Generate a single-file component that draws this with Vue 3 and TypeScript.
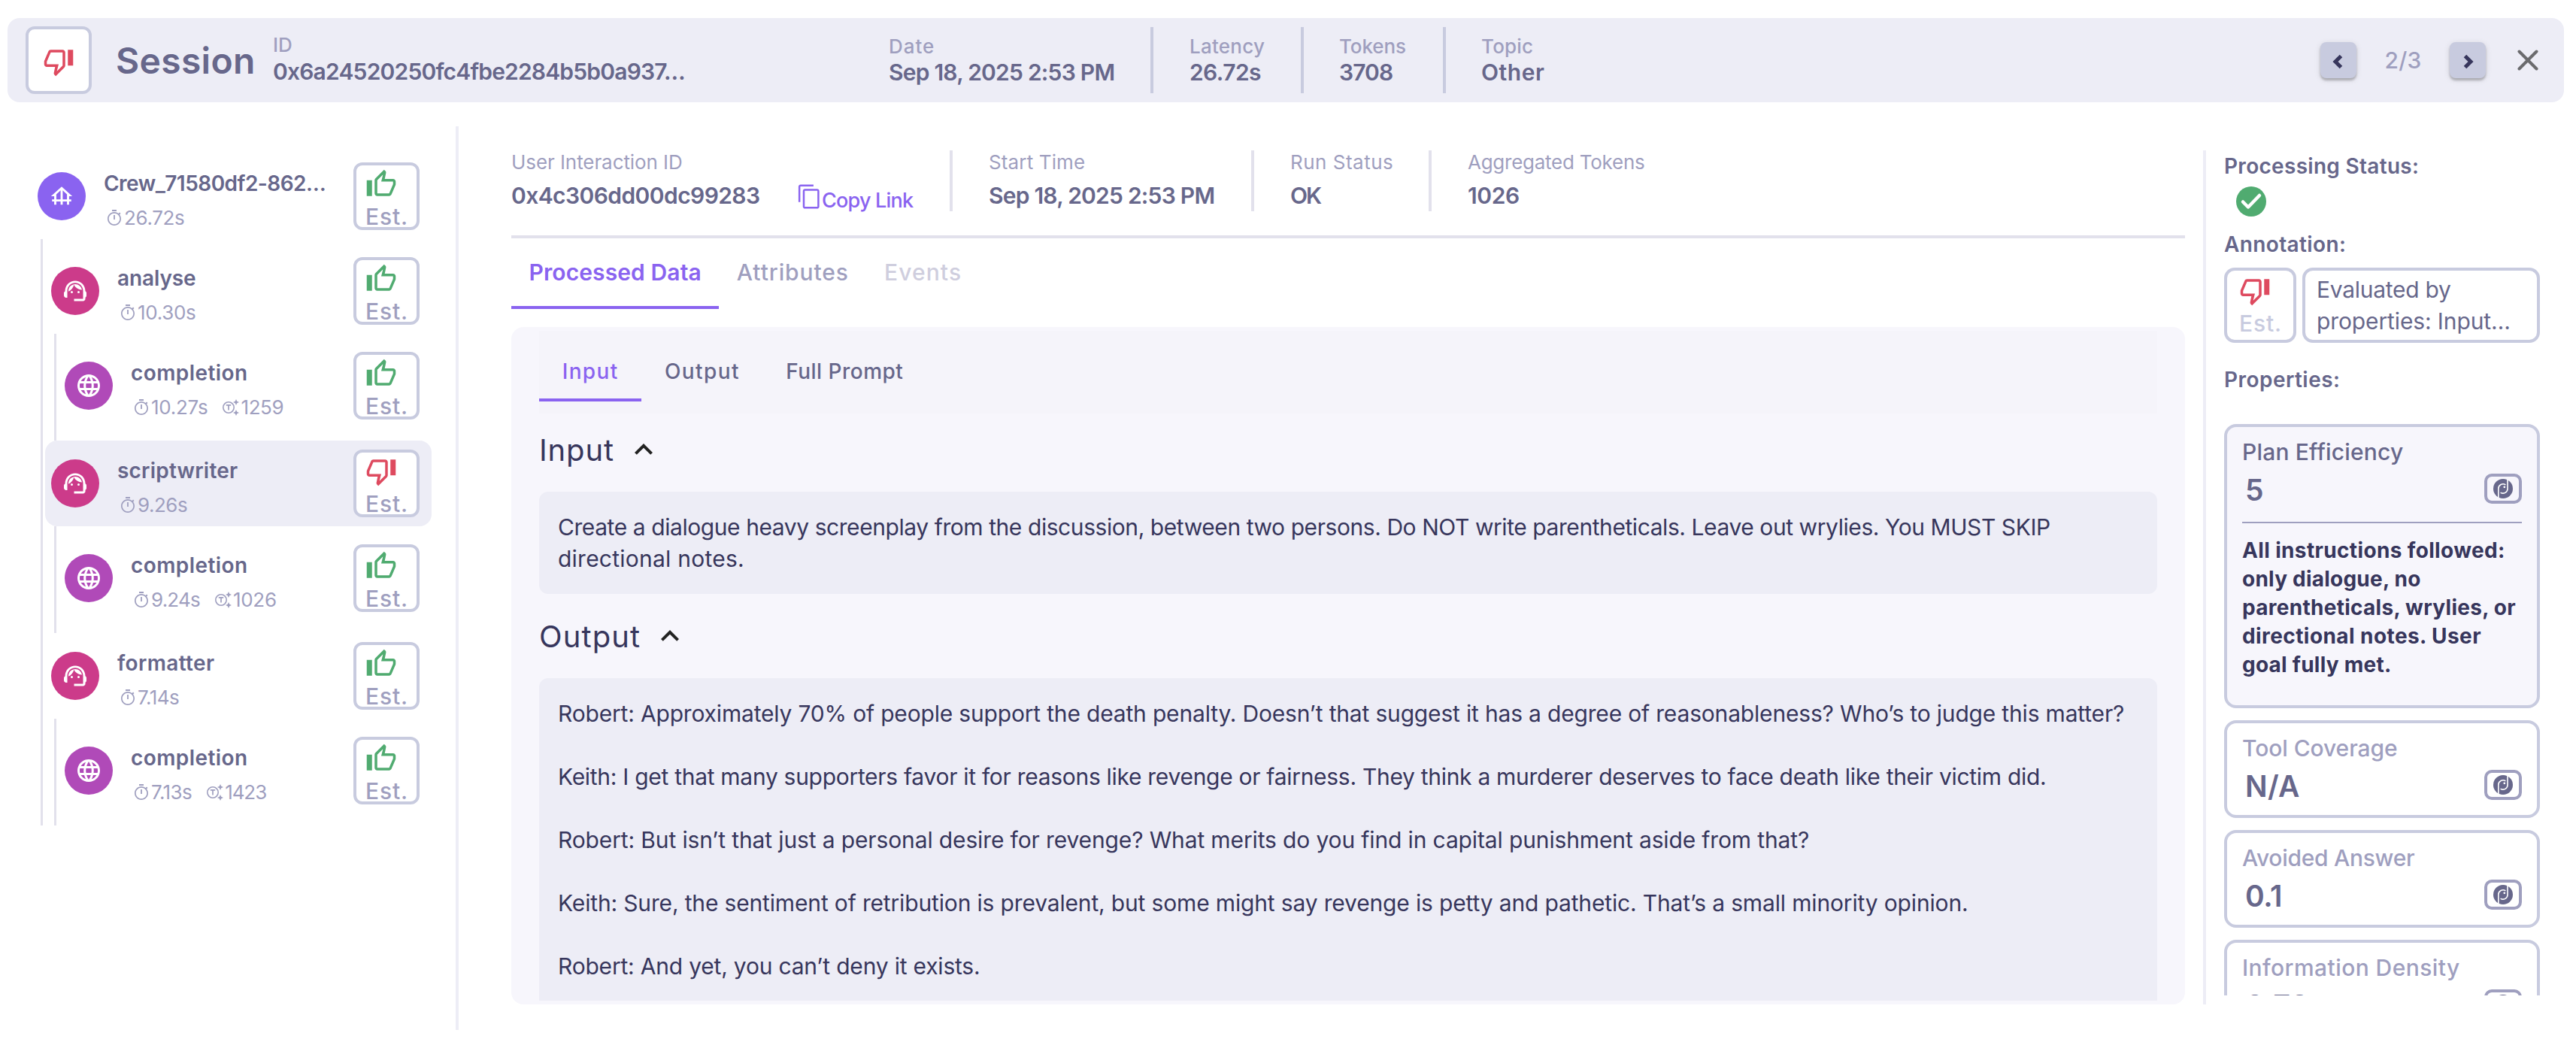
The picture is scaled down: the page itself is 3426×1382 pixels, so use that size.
<script setup lang="ts">
import type { Directive } from 'vue'

type Verdict = 'up' | 'down'
type Kind = 'crew' | 'agent' | 'llm'

interface Fitted {
  text: string
  fit: number
}

interface Span {
  kind: Kind
  name: Fitted
  time: Fitted
  tokens?: Fitted
  verdict: Verdict
  selected?: boolean
  children?: Span[]
}

/** Tracks a single-line label so that its glyphs span the given width in px. */
const vFit: Directive<HTMLElement, number> = {
  mounted(el, { value }) {
    const text = (el.textContent ?? '').trim()
    const ctx = document.createElement('canvas').getContext('2d')
    if (!ctx || text.length < 2) return
    const cs = getComputedStyle(el)
    ctx.font = `${cs.fontWeight} ${cs.fontSize} ${cs.fontFamily}`
    const m = ctx.measureText(text)
    const ink = m.actualBoundingBoxLeft + m.actualBoundingBoxRight
    el.style.letterSpacing = `${((value - ink) / (text.length - 1)).toFixed(3)}px`
  },
}

const icons: Record<Kind | Verdict | 'timer', string> = {
  crew: 'M19 12h3L12 3 2 12h3v3H3v2h2v3h2v-3h4v3h2v-3h4v3h2v-3h2v-2h-2v-3zM7 15v-4.81l4-3.6V15H7zm6 0V6.59l4 3.6V15h-4z',
  agent:
    'M21 12.22C21 6.73 16.74 3 12 3c-4.69 0-9 3.65-9 9.28-.6.34-1 .98-1 1.72v2c0 1.1.9 2 2 2h1v-6.1c0-3.87 3.13-7 7-7s7 3.13 7 7V19h-8v2h8c1.1 0 2-.9 2-2v-1.22c.59-.31 1-.92 1-1.64v-2.3c0-.7-.41-1.31-1-1.62zM8 13a1 1 0 1 0 2 0 1 1 0 1 0-2 0zM14 13a1 1 0 1 0 2 0 1 1 0 1 0-2 0zM18 11.03C17.52 8.18 15.04 6 12.05 6c-3.03 0-6.29 2.51-6.03 6.45 2.47-1.01 4.33-3.21 4.86-5.89 1.31 2.63 4 4.44 7.12 4.47z',
  llm: 'M11.99 2C6.47 2 2 6.48 2 12s4.47 10 9.99 10C17.52 22 22 17.52 22 12S17.52 2 11.99 2zm6.93 6h-2.95c-.32-1.25-.78-2.45-1.38-3.56 1.84.63 3.37 1.91 4.33 3.56zM12 4.04c.83 1.2 1.48 2.53 1.91 3.96h-3.82c.43-1.43 1.08-2.76 1.91-3.96zM4.26 14C4.1 13.36 4 12.69 4 12s.1-1.36.26-2h3.38c-.08.66-.14 1.32-.14 2s.06 1.34.14 2H4.26zm.82 2h2.95c.32 1.25.78 2.45 1.38 3.56-1.84-.63-3.37-1.9-4.33-3.56zm2.95-8H5.08c.96-1.66 2.49-2.93 4.33-3.56C8.81 5.55 8.35 6.75 8.03 8zM12 19.96c-.83-1.2-1.48-2.53-1.91-3.96h3.82c-.43 1.43-1.08 2.76-1.91 3.96zM14.34 14H9.66c-.09-.66-.16-1.32-.16-2s.07-1.35.16-2h4.68c.09.65.16 1.32.16 2s-.07 1.34-.16 2zm.25 5.56c.6-1.11 1.06-2.31 1.38-3.56h2.95c-.96 1.65-2.49 2.93-4.33 3.56zM16.36 14c.08-.66.14-1.32.14-2s-.06-1.34-.14-2h3.38c.16.64.26 1.31.26 2s-.1 1.36-.26 2h-3.38z',
  up: 'M9 21h9c.83 0 1.54-.5 1.84-1.22l3.02-7.05c.09-.23.14-.47.14-.73v-2c0-1.1-.9-2-2-2h-6.31l.95-4.57.03-.32c0-.41-.17-.79-.44-1.06L14.17 1 7.58 7.59C7.22 7.95 7 8.45 7 9v10c0 1.1.9 2 2 2zM9 9l4.34-4.34L12 10h9v2l-3 7H9V9zM1 9h4v12H1z',
  down: 'M15 3H6c-.83 0-1.54.5-1.84 1.22l-3.02 7.05c-.09.23-.14.47-.14.73v2c0 1.1.9 2 2 2h6.31l-.95 4.57-.03.32c0 .41.17.79.44 1.06L9.83 23l6.59-6.59c.36-.36.58-.86.58-1.41V5c0-1.1-.9-2-2-2zm0 12l-4.34 4.34L12 14H3v-2l3-7h9v10zm4-12h4v12h-4z',
  timer:
    'M15 1H9v2h6V1zm-3.9 13h1.8V8h-1.8v6zm7.93-6.61l1.42-1.42c-.43-.51-.9-.99-1.41-1.41l-1.42 1.42C16.07 4.74 14.12 4 12 4c-4.97 0-9 4.03-9 9s4.02 9 9 9 9-4.03 9-9c0-2.12-.74-4.07-1.97-5.61zM12 20.3c-4.03 0-7.3-3.27-7.3-7.3S7.97 5.7 12 5.7s7.3 3.27 7.3 7.3-3.27 7.3-7.3 7.3z',
}

const stats = [
  { cls: 'date', label: 'Date', lf: 58, value: 'Sep 18, 2025 2:53 PM', vf: 299 },
  { cls: 'latency', label: 'Latency', lf: 98, value: '26.72s', vf: 94 },
  { cls: 'tokens', label: 'Tokens', lf: 87, value: '3708', vf: 70 },
  { cls: 'topic', label: 'Topic', lf: 67, value: 'Other', vf: 83 },
]

const runInfo = [
  { cls: 'start', label: 'Start Time', lf: 126, value: 'Sep 18, 2025 2:53 PM', vf: 299 },
  { cls: 'status', label: 'Run Status', lf: 134, value: 'OK', vf: 41 },
  { cls: 'aggregated', label: 'Aggregated Tokens', lf: 235, value: '1026', vf: 67 },
]

const root: Span = {
  kind: 'crew',
  name: { text: 'Crew_71580df2-862…', fit: 293 },
  time: { text: '26.72s', fit: 79 },
  verdict: 'up',
  children: [
    {
      kind: 'agent',
      name: { text: 'analyse', fit: 103 },
      time: { text: '10.30s', fit: 76 },
      verdict: 'up',
      children: [
        {
          kind: 'llm',
          name: { text: 'completion', fit: 153 },
          time: { text: '10.27s', fit: 74 },
          tokens: { text: '1259', fit: 55 },
          verdict: 'up',
        },
      ],
    },
    {
      kind: 'agent',
      name: { text: 'scriptwriter', fit: 159 },
      time: { text: '9.26s', fit: 65 },
      verdict: 'down',
      selected: true,
      children: [
        {
          kind: 'llm',
          name: { text: 'completion', fit: 153 },
          time: { text: '9.24s', fit: 64 },
          tokens: { text: '1026', fit: 56 },
          verdict: 'up',
        },
      ],
    },
    {
      kind: 'agent',
      name: { text: 'formatter', fit: 129 },
      time: { text: '7.14s', fit: 54 },
      verdict: 'up',
      children: [
        {
          kind: 'llm',
          name: { text: 'completion', fit: 153 },
          time: { text: '7.13s', fit: 53 },
          tokens: { text: '1423', fit: 54 },
          verdict: 'up',
        },
      ],
    },
  ],
}

const agents = root.children ?? []

const tabs = [
  { text: 'Processed Data', fit: 226, cls: 'active' },
  { text: 'Attributes', fit: 147, cls: '' },
  { text: 'Events', fit: 99, cls: 'disabled' },
]

const innerTabs = [
  { text: 'Input', fit: 71, active: true },
  { text: 'Output', fit: 97, active: false },
  { text: 'Full Prompt', fit: 153, active: false },
]

const inputLines: Fitted[] = [
  {
    text: 'Create a dialogue heavy screenplay from the discussion, between two persons. Do NOT write parentheticals. Leave out wrylies. You MUST SKIP',
    fit: 1983,
  },
  { text: 'directional notes.', fit: 245 },
]

const outputLines: Fitted[] = [
  {
    text: 'Robert: Approximately 70% of people support the death penalty. Doesn’t that suggest it has a degree of reasonableness? Who’s to judge this matter?',
    fit: 2080,
  },
  {
    text: 'Keith: I get that many supporters favor it for reasons like revenge or fairness. They think a murderer deserves to face death like their victim did.',
    fit: 1976,
  },
  {
    text: 'Robert: But isn’t that just a personal desire for revenge? What merits do you find in capital punishment aside from that?',
    fit: 1661,
  },
  {
    text: 'Keith: Sure, the sentiment of retribution is prevalent, but some might say revenge is petty and pathetic. That’s a small minority opinion.',
    fit: 1872,
  },
  { text: 'Robert: And yet, you can’t deny it exists.', fit: 558 },
]

const annotation: Fitted[] = [
  { text: 'Evaluated by', fit: 177 },
  { text: 'properties: Input…', fit: 254 },
]

const properties: { title: Fitted; value: Fitted; notes?: Fitted[] }[] = [
  {
    title: { text: 'Plan Efficiency', fit: 212 },
    value: { text: '5', fit: 20 },
    notes: [
      { text: 'All instructions followed:', fit: 348 },
      { text: 'only dialogue, no', fit: 237 },
      { text: 'parentheticals, wrylies, or', fit: 364 },
      { text: 'directional notes. User', fit: 317 },
      { text: 'goal fully met.', fit: 196 },
    ],
  },
  { title: { text: 'Tool Coverage', fit: 205 }, value: { text: 'N/A', fit: 70 } },
  { title: { text: 'Avoided Answer', fit: 229 }, value: { text: '0.1', fit: 46 } },
  { title: { text: 'Information Density', fit: 287 }, value: { text: '0.78', fit: 82 } },
]
</script>

<template>
  <div class="page">
    <header class="topbar">
      <div class="verdict-box">
        <svg class="thumb down" viewBox="0 0 24 24"><path :d="icons.down" /></svg>
      </div>
      <div class="heading"><span v-fit="181">Session</span></div>
      <div class="session-id">
        <div class="label"><span v-fit="23">ID</span></div>
        <div class="value"><span v-fit="546">0x6a24520250fc4fbe2284b5b0a937…</span></div>
      </div>
      <div v-for="s in stats" :key="s.label" class="stat" :class="s.cls">
        <div class="label"><span v-fit="s.lf">{{ s.label }}</span></div>
        <div class="value"><span v-fit="s.vf">{{ s.value }}</span></div>
      </div>
      <nav class="pager">
        <button class="nav-btn" aria-label="Previous">
          <svg viewBox="0 0 48 48"><path d="M27.5 18.5L20 26l7.5 7.5" /></svg>
        </button>
        <span class="count"><span v-fit="46">2/3</span></span>
        <button class="nav-btn" aria-label="Next">
          <svg viewBox="0 0 48 48"><path d="M20.5 18.5L28 26l-7.5 7.5" /></svg>
        </button>
        <svg class="close" viewBox="0 0 28 28"><path d="M2.5 2.5l23 23M25.5 2.5l-23 23" /></svg>
      </nav>
    </header>

    <div class="body">
      <aside class="sidebar">
        <div class="row">
          <span class="disc" :class="root.kind">
            <svg viewBox="0 0 24 24"><path :d="icons[root.kind]" /></svg>
          </span>
          <div class="info">
            <div class="name"><span v-fit="root.name.fit">{{ root.name.text }}</span></div>
            <div class="meta">
              <svg viewBox="0 0 24 24"><path :d="icons.timer" /></svg>
              <span v-fit="root.time.fit">{{ root.time.text }}</span>
            </div>
          </div>
          <div class="est">
            <svg class="thumb" :class="root.verdict" viewBox="0 0 24 24"><path :d="icons[root.verdict]" /></svg>
            <span v-fit="52">Est.</span>
          </div>
        </div>
        <div class="rail outer">
          <template v-for="(agent, i) in agents" :key="i">
            <div class="row" :class="{ selected: agent.selected }">
              <span class="disc" :class="agent.kind">
                <svg viewBox="0 0 24 24"><path :d="icons[agent.kind]" /></svg>
              </span>
              <div class="info">
                <div class="name"><span v-fit="agent.name.fit">{{ agent.name.text }}</span></div>
                <div class="meta">
                  <svg viewBox="0 0 24 24"><path :d="icons.timer" /></svg>
                  <span v-fit="agent.time.fit">{{ agent.time.text }}</span>
                </div>
              </div>
              <div class="est">
                <svg class="thumb" :class="agent.verdict" viewBox="0 0 24 24"><path :d="icons[agent.verdict]" /></svg>
                <span v-fit="52">Est.</span>
              </div>
            </div>
            <div class="rail">
              <div v-for="(call, j) in agent.children" :key="j" class="row">
                <span class="disc" :class="call.kind">
                  <svg viewBox="0 0 24 24"><path :d="icons[call.kind]" /></svg>
                </span>
                <div class="info">
                  <div class="name"><span v-fit="call.name.fit">{{ call.name.text }}</span></div>
                  <div class="meta">
                    <svg viewBox="0 0 24 24"><path :d="icons.timer" /></svg>
                    <span v-fit="call.time.fit">{{ call.time.text }}</span>
                    <template v-if="call.tokens">
                      <svg class="token" viewBox="0 0 24 24">
                        <circle cx="9" cy="12" r="7.2" fill="none" stroke="currentColor" stroke-width="1.6" />
                        <path d="M5.8 8h6.4v1.7H9.85v5.8h-1.7V9.7H5.8z" />
                        <path d="M20.25 3.75L23 5l-2.75 1.25L19 9l-1.25-2.75L15 5l2.75-1.25L19 1zM20.25 17.75L23 19l-2.75 1.25L19 23l-1.25-2.75L15 19l2.75-1.25L19 15z" />
                      </svg>
                      <span v-fit="call.tokens.fit">{{ call.tokens.text }}</span>
                    </template>
                  </div>
                </div>
                <div class="est">
                  <svg class="thumb" :class="call.verdict" viewBox="0 0 24 24"><path :d="icons[call.verdict]" /></svg>
                  <span v-fit="52">Est.</span>
                </div>
              </div>
            </div>
          </template>
        </div>
      </aside>

      <main class="main">
        <div class="run-info">
          <div class="field interaction">
            <div>
              <div class="label"><span v-fit="225">User Interaction ID</span></div>
              <div class="value"><span v-fit="329">0x4c306dd00dc99283</span></div>
            </div>
            <a class="copy">
              <svg viewBox="0 0 24 24"><path d="M15.7 1H4c-1.1 0-2 .9-2 2v14h1.7V2.7h12V1zM19 5H8c-1.1 0-2 .9-2 2v14c0 1.1.9 2 2 2h11c1.1 0 2-.9 2-2V7c0-1.1-.9-2-2-2zm.3 16.3H7.7V6.7h11.6v14.6z" /></svg>
              <span v-fit="121">Copy Link</span>
            </a>
          </div>
          <div v-for="f in runInfo" :key="f.label" class="field" :class="f.cls">
            <div>
              <div class="label"><span v-fit="f.lf">{{ f.label }}</span></div>
              <div class="value"><span v-fit="f.vf">{{ f.value }}</span></div>
            </div>
          </div>
        </div>

        <div class="tabs">
          <div v-for="t in tabs" :key="t.text" class="tab" :class="t.cls"><span v-fit="t.fit">{{ t.text }}</span></div>
        </div>

        <section class="panel">
          <div class="scroll">
            <div class="inner-tabs">
              <div v-for="t in innerTabs" :key="t.text" class="inner-tab" :class="{ active: t.active }">
                <span v-fit="t.fit">{{ t.text }}</span>
              </div>
            </div>
            <h2 class="section-title">
              <span v-fit="96">Input</span>
              <svg viewBox="0 0 24 24"><path d="M12 8l-6 6 1.41 1.41L12 10.83l4.59 4.58L18 14z" /></svg>
            </h2>
            <div class="block">
              <p v-for="(l, i) in inputLines" :key="i"><span v-fit="l.fit">{{ l.text }}</span></p>
            </div>
            <h2 class="section-title">
              <span v-fit="132">Output</span>
              <svg viewBox="0 0 24 24"><path d="M12 8l-6 6 1.41 1.41L12 10.83l4.59 4.58L18 14z" /></svg>
            </h2>
            <div class="block dialogue">
              <p v-for="(l, i) in outputLines" :key="i"><span v-fit="l.fit">{{ l.text }}</span></p>
            </div>
          </div>
        </section>
      </main>

      <aside class="details">
        <h3 class="caption"><span v-fit="255">Processing Status:</span></h3>
        <svg class="check" viewBox="0 0 40 40">
          <circle cx="20" cy="20" r="20" />
          <path d="M9 20.5l7 7L31 12" />
        </svg>
        <h3 class="caption"><span v-fit="160">Annotation:</span></h3>
        <div class="annotation">
          <div class="est large">
            <svg class="thumb down" viewBox="0 0 24 24"><path :d="icons.down" /></svg>
            <span v-fit="52">Est.</span>
          </div>
          <div class="comment">
            <div v-for="l in annotation" :key="l.text"><span v-fit="l.fit">{{ l.text }}</span></div>
          </div>
        </div>
        <h3 class="caption"><span v-fit="150">Properties:</span></h3>
        <div class="cards">
          <article v-for="p in properties" :key="p.title.text" class="card" :class="{ open: p.notes }">
            <div class="card-title"><span v-fit="p.title.fit">{{ p.title.text }}</span></div>
            <div class="card-value">
              <span v-fit="p.value.fit" class="figure">{{ p.value.text }}</span>
              <span class="badge">
                <svg viewBox="0 0 26 26">
                  <circle cx="13" cy="13" r="13" />
                  <path d="M6.8 25V13a6.2 6.2 0 0 1 9.6-5.2M19 1v12a6.1 6.1 0 0 1-9.4 5.1" />
                  <circle cx="13" cy="13.2" r="4.6" />
                  <circle class="glint" cx="14.8" cy="10.8" r="1.4" />
                </svg>
              </span>
            </div>
            <div v-if="p.notes" class="notes">
              <div v-for="n in p.notes" :key="n.text"><span v-fit="n.fit">{{ n.text }}</span></div>
            </div>
          </article>
        </div>
      </aside>
    </div>
  </div>
</template>

<style>
body {
  background: #fff;
}
</style>

<style scoped>
.page {
  width: 3426px;
  height: 1382px;
  box-sizing: border-box;
  padding-top: 24px;
  overflow: hidden;
  font-family: Inter, 'Open Sans', sans-serif;
  font-size: 30px;
  color: #67678b;
  background: #fff;
  white-space: nowrap;
}
.page * {
  box-sizing: border-box;
}
h2,
h3,
p {
  margin: 0;
}
svg {
  display: block;
  flex: none;
  fill: currentColor;
}
.label {
  color: #9f9fbf;
  font-size: 26px;
}
.value {
  font-weight: 600;
}

/* Top bar */
.topbar {
  display: flex;
  align-items: center;
  height: 112px;
  margin: 0 16px 0 10px;
  padding-left: 24px;
  border-radius: 16px;
  background: #ededf6;
}
.verdict-box {
  display: flex;
  align-items: center;
  justify-content: center;
  width: 88px;
  height: 90px;
  padding-top: 4px;
  border: 4px solid #c8cbdf;
  border-radius: 12px;
  background: #fff;
}
.thumb {
  width: 42px;
  height: 42px;
}
.up {
  color: #50ab70;
}
.down {
  color: #de4a5f;
}
.heading {
  width: 241px;
  padding-left: 32px;
  font-size: 48px;
  font-weight: 600;
}
.session-id {
  width: 819px;
  height: 72px;
}
.session-id .label,
.stat .label {
  line-height: 31px;
  font-weight: 500;
}
.session-id .value {
  line-height: 40px;
}
.stat {
  height: 88px;
  padding-top: 10px;
  border-right: 4px solid #c8cbdf;
}
.stat .value {
  line-height: 38px;
}
.date {
  width: 352px;
}
.latency {
  width: 200px;
  padding-left: 48px;
}
.tokens {
  width: 189px;
  padding-left: 47px;
}
.topic {
  padding-left: 47px;
  border-right: 0;
}
.pager {
  display: flex;
  align-items: center;
  margin-left: auto;
  margin-right: 34px;
}
.nav-btn {
  width: 48px;
  height: 48px;
  padding: 0;
  border: 0;
  border-radius: 8px;
  background: #c8cbdf;
  box-shadow: 0 3px 3px rgba(0, 0, 0, 0.22), 0 2px 8px rgba(0, 0, 0, 0.12);
}
.nav-btn path {
  fill: none;
  stroke: #37365c;
  stroke-width: 5;
}
.count {
  width: 124px;
  text-align: center;
  font-weight: 500;
  color: #9f9fbf;
}
.close {
  width: 28px;
  height: 28px;
  margin-left: 42px;
}
.close path {
  stroke: #6b6b6e;
  stroke-width: 4;
  stroke-linecap: round;
}

/* Columns */
.body {
  display: flex;
  margin-top: 32px;
}
.sidebar {
  width: 610px;
  height: 1202px;
  padding: 36px 32px 0 42px;
  border-right: 4px solid #ededf6;
}
.row {
  display: flex;
  align-items: center;
  height: 114px;
  padding: 0 16px 0 8px;
  border-radius: 16px;
}
.selected {
  background: #ededf6;
}
.rail {
  margin-left: 12px;
  padding: 12px 0 16px 3px;
  border-left: 3px solid #e2e1ec;
}
.outer {
  padding-bottom: 0;
}
.disc {
  display: flex;
  align-items: center;
  justify-content: center;
  width: 64px;
  height: 64px;
  border-radius: 50%;
  color: #fff;
}
.disc svg {
  width: 36px;
  height: 36px;
}
.disc.crew {
  background: #8a63f0;
}
.disc.crew svg {
  width: 34px;
  height: 34px;
}
.disc.agent {
  background: #cc3b8a;
}
.disc.llm {
  background: #b04ab8;
}
.info {
  flex: 1;
  padding: 8px 0 0 24px;
}
.name {
  line-height: 36px;
  font-size: 28px;
  font-weight: 600;
}
.meta {
  display: flex;
  align-items: center;
  height: 30px;
  margin: 13px 0 0 2px;
  font-size: 26px;
  color: #9f9fbf;
}
.meta svg {
  width: 24px;
  height: 24px;
  margin-right: 1px;
}
.meta .token {
  margin-left: 19px;
}
.est {
  display: flex;
  flex-direction: column;
  width: 88px;
  height: 90px;
  padding: 4px 0 0 12px;
  border: 4px solid #c8cbdf;
  border-radius: 12px;
  background: #fff;
  line-height: 30px;
  font-weight: 500;
  color: #9f9fbf;
}
.est span {
  margin-top: 7px;
}
.large {
  width: 96px;
  height: 100px;
  padding: 6px 0 0 16px;
  border-radius: 14px;
  color: #c8cbdf;
}

/* Main column */
.main {
  display: flex;
  flex-direction: column;
  width: 2226px;
  height: 1136px;
  margin: 32px 24px 0 70px;
}
.run-info {
  display: flex;
  padding-bottom: 32px;
  border-bottom: 4px solid #e2e1ec;
}
.field {
  height: 81px;
  padding-left: 48px;
  border-right: 4px solid #e2e1ec;
}
.field .label {
  line-height: 32px;
}
.field .value {
  margin-top: 8px;
  line-height: 40px;
}
.interaction {
  display: flex;
  justify-content: space-between;
  width: 587px;
  padding: 0 45px 0 0;
}
.start {
  width: 401px;
}
.status {
  width: 236px;
}
.aggregated {
  border-right: 0;
}
.copy {
  display: flex;
  align-items: center;
  width: 159px;
  height: 35px;
  margin-top: 44px;
  font-size: 27px;
  font-weight: 500;
  line-height: 35px;
  color: #8a63f0;
}
.copy svg {
  width: 35px;
  height: 35px;
  margin-right: -1px;
}
.copy span {
  margin-top: 9px;
}
.tabs {
  display: flex;
}
.tab {
  height: 94px;
  padding: 25px 23.5px 0;
  border-bottom: 4px solid transparent;
  line-height: 40px;
  font-weight: 500;
  color: #9f9fbf;
}
.tab.active {
  border-color: #8a63f0;
  color: #8a63f0;
  font-weight: 600;
}
.tab.disabled {
  color: #cfcede;
}
.panel {
  flex: 1;
  min-height: 0;
  margin-top: 24px;
  padding: 5px 37px;
  border-radius: 16px;
  background: #f7f6fc;
}
.scroll {
  display: flex;
  flex-direction: column;
  height: 100%;
  overflow: hidden;
}
.inner-tabs {
  display: flex;
  flex: none;
  height: 110px;
  padding-top: 34px;
  background: #f5f4fa;
}
.inner-tab {
  height: 60px;
  padding: 0 30.7px;
  border-bottom: 4px solid transparent;
  line-height: 40px;
  font-size: 28px;
  font-weight: 500;
}
.inner-tab.active {
  border-color: #8a63f0;
  color: #8a63f0;
}
.section-title {
  display: flex;
  align-items: center;
  flex: none;
  height: 48px;
  margin: 24px 0 32px;
  font-size: 40px;
  font-weight: 400;
  color: #37365c;
}
.block + .section-title {
  margin-top: 32px;
}
.section-title svg {
  width: 48px;
  height: 48px;
  margin-left: 15px;
  color: #222;
}
.block {
  padding: 26px 0 26px 25px;
  border-radius: 12px;
  background: #ededf6;
  line-height: 42px;
  color: #37365c;
}
.dialogue {
  flex: 1;
  border-radius: 12px 12px 0 0;
}
.dialogue p + p {
  margin-top: 42px;
}

/* Details column */
.details {
  width: 448px;
  height: 1136px;
  margin-top: 32px;
  padding: 3px 0 0 24px;
  border-left: 4px solid #ededf6;
}
.caption {
  line-height: 36px;
  font-size: 28px;
  font-weight: 600;
}
.check {
  width: 40px;
  height: 40px;
  margin: 9px 0 19px 16px;
  color: #50ab70;
}
.check path {
  fill: none;
  stroke: #fff;
  stroke-width: 4.5;
  stroke-linecap: round;
  stroke-linejoin: round;
}
.annotation {
  display: flex;
  gap: 8px;
  margin: 13px 0 31px;
}
.comment {
  width: 316px;
  height: 100px;
  padding: 4px 0 0 15px;
  border: 4px solid #c8cbdf;
  border-radius: 14px;
  line-height: 42px;
}
.cards {
  display: flex;
  flex-direction: column;
  gap: 16px;
  width: 420px;
  height: 760px;
  margin-top: 41px;
  overflow: hidden;
}
.card {
  flex: none;
  height: 130px;
  padding: 13px 20px 0;
  border: 4px solid #c8cbdf;
  border-radius: 16px;
}
.card.open {
  height: 378px;
  background: #f7f6fc;
}
.card-title {
  line-height: 40px;
  font-weight: 500;
  color: #9f9fbf;
}
.open .card-title {
  color: #67678b;
}
.card-value {
  display: flex;
  align-items: center;
  justify-content: space-between;
  height: 40px;
  margin-top: 9px;
  padding-left: 4px;
  font-size: 39px;
  font-weight: 600;
}
.figure {
  padding-top: 3px;
}
.badge {
  display: flex;
  align-items: center;
  justify-content: center;
  width: 50px;
  height: 40px;
  border: 4px solid #9f9fbf;
  border-radius: 10px;
}
.badge svg {
  width: 26px;
  height: 26px;
}
.badge path {
  fill: none;
  stroke: #fff;
  stroke-width: 1.6;
}
.badge .glint {
  fill: #fff;
}
.notes {
  margin-top: 24px;
  padding-top: 17px;
  border-top: 2px solid #9f9fbf;
  line-height: 38px;
  font-size: 28px;
  font-weight: 700;
  color: #37365c;
}
</style>
